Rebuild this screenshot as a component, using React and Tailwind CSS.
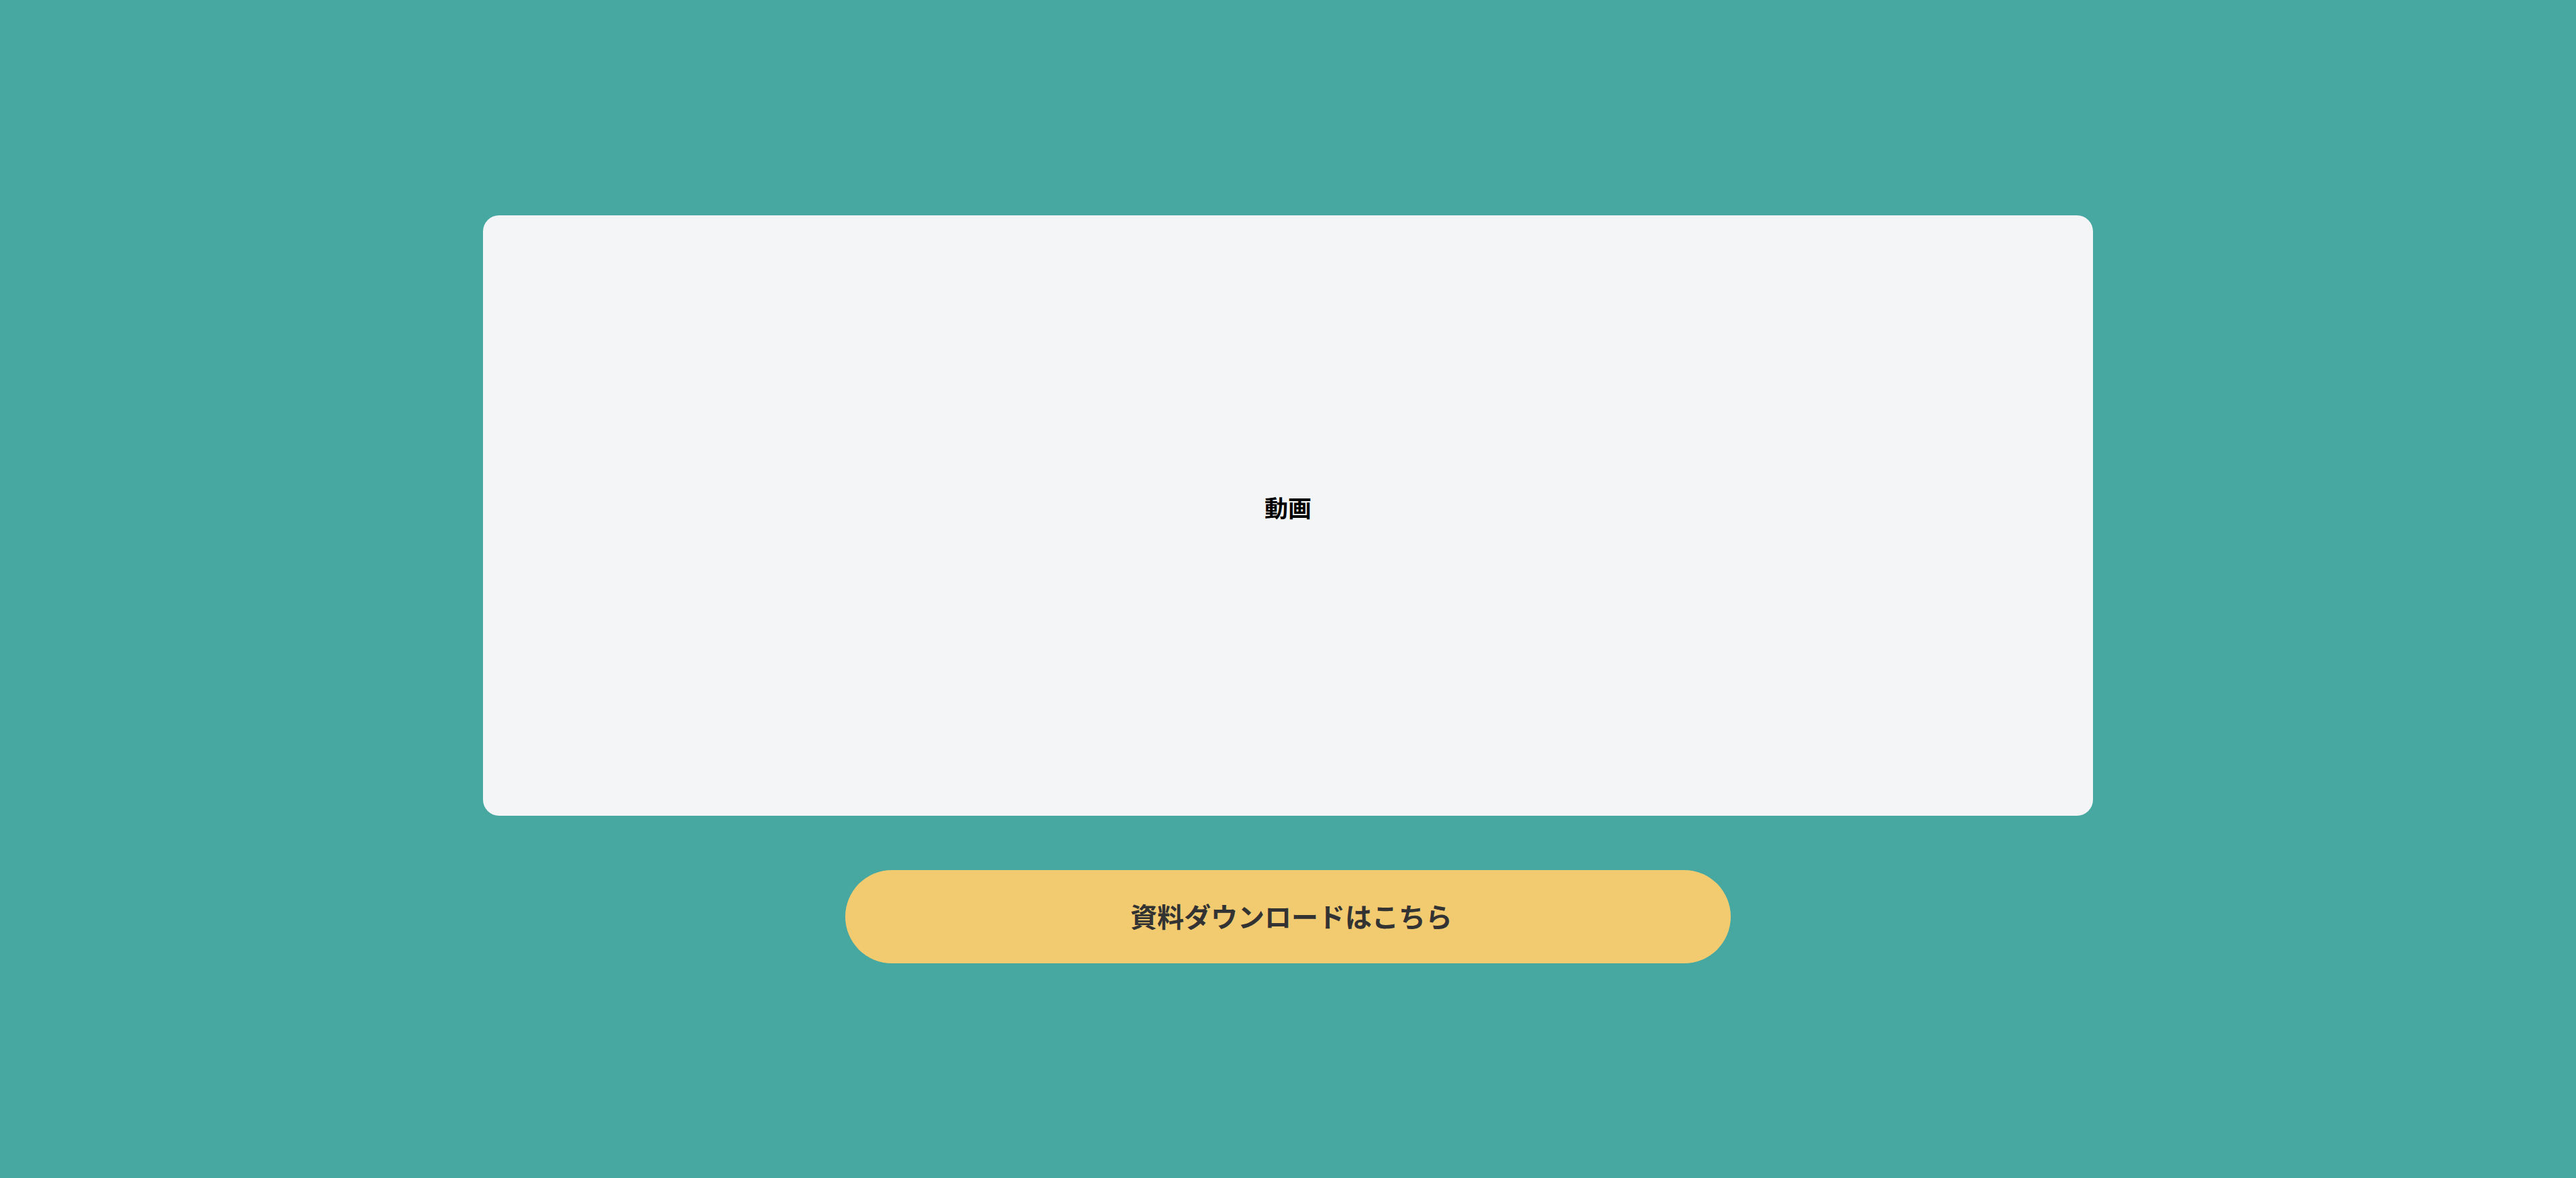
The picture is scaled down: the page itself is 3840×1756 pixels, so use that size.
export default function App() {
  return (
    <main
      className="flex min-h-screen flex-col items-center justify-center bg-[#46a8a1] py-[320px]"
      style={{ fontFamily: '"Noto Sans CJK JP", "Noto Sans", sans-serif' }}
    >
      <section className="flex h-[895px] w-[2400px] items-center justify-center rounded-[24px] bg-[#f4f5f7]">
        <p className="-mt-[24px] text-[35px] font-bold text-black">動画</p>
      </section>

      <a
        href="#"
        className="mt-[81px] flex h-[139px] w-[1320px] items-center justify-center rounded-full bg-[#f2cb71] pb-[2px] pl-[10px] text-[40px] font-bold tracking-normal text-[#333333]"
      >
        資料ダウンロードはこちら
      </a>
    </main>
  );
}
